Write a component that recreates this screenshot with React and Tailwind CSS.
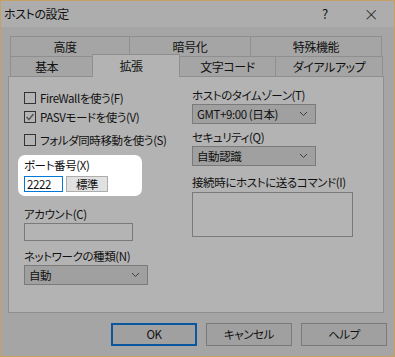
import React from "react";

function Chevron() {
  return (
    <svg width="9" height="6" viewBox="0 0 9 6" className="shrink-0">
      <polyline points="1,1 4.5,4.5 8,1" fill="none" stroke="#3c3c3c" strokeWidth="1" />
    </svg>
  );
}

function Check({ checked, label }) {
  return (
    <div className="flex h-[16px] items-center gap-[4px]">
      <div className="flex h-[12px] w-[12px] items-center justify-center border border-[#333333] bg-[#b4b4b4]">
        {checked && (
          <svg width="10" height="10" viewBox="0 0 10 10">
            <polyline points="1.5,5 4,7.5 8.5,2" fill="none" stroke="#505050" strokeWidth="1.3" />
          </svg>
        )}
      </div>
      <span className="leading-[16px]">{label}</span>
    </div>
  );
}

function Select({ value, width }) {
  return (
    <div className={`mt-[1px] flex h-[20px] ${width} items-center justify-between border border-[#7a7a7a] bg-[#a0a0a0] pl-[4px] pr-[7px]`}>
      <span className="leading-[16px]">{value}</span>
      <Chevron />
    </div>
  );
}

function Label({ children, className = "" }) {
  return <div className={`h-[16px] leading-[16px] ${className}`}>{children}</div>;
}

export default function App() {
  return (
    <div className="flex h-[357px] w-[395px] flex-col border border-[#c9a063] bg-[#a5a5a5] font-['Noto_Sans_CJK_JP',sans-serif] text-[11.5px] tracking-[-0.4px] text-[#111111] [font-feature-settings:'palt']">
      {/* title bar */}
      <div className="flex h-[26px] items-center bg-[#adadad]">
        <span className="flex-1 pl-[3px] text-[12px]">ホストの設定</span>
        <span className="flex w-[46px] justify-center text-[13px]">?</span>
        <span className="flex w-[46px] justify-center text-[15px] font-light">×</span>
      </div>

      {/* tabs */}
      <div className="ml-[9px] mt-[9px] flex h-[20px] text-[12px]">
        <div className="flex w-[120px] items-center justify-center border-l border-r border-t border-[#8f8f8f] pr-[10px]">高度</div>
        <div className="flex w-[121px] items-center justify-center border-r border-t border-[#8f8f8f]">暗号化</div>
        <div className="flex w-[131px] items-center justify-center border-r border-t border-[#8f8f8f]">特殊機能</div>
      </div>
      <div className="ml-[9px] flex h-[20px] items-end text-[12px]">
        <div className="flex h-[20px] w-[82px] items-center justify-center border-l border-t border-[#8f8f8f] pr-[10px]">基本</div>
        <div className="relative top-[1px] z-10 flex h-[23px] w-[88px] items-center justify-center border-l border-r border-t border-[#8f8f8f] bg-[#b3b3b3] pr-[10px]">拡張</div>
        <div className="flex h-[20px] w-[95px] items-center justify-center border-t border-[#8f8f8f]">文字コード</div>
        <div className="flex h-[20px] w-[108px] items-center justify-center border-l border-r border-t border-[#8f8f8f]">ダイアルアップ</div>
      </div>

      {/* panel */}
      <div className="ml-[7px] flex h-[237px] w-[376px] border border-[#8f8f8f] bg-[#b3b3b3] pl-[15px]">
        <div className="flex w-[168px] flex-col">
          <div className="mt-[13px]">
            <Check label="FireWallを使う(F)" />
          </div>
          <div className="mt-[3px]">
            <Check checked label="PASVモードを使う(V)" />
          </div>
          <div className="mt-[7px]">
            <Check label="フォルダ同時移動を使う(S)" />
          </div>
          <div className="-ml-[6px] mt-[7px] h-[41px] w-[124px] rounded-[7px] bg-white px-[6px] pt-[2px]">
            <Label>ポート番号(X)</Label>
            <div className="mt-[3px] flex">
              <div className="flex h-[16px] w-[39px] items-center border border-[#0078d7] bg-white pl-[2px] leading-[14px]">2222</div>
              <div className="ml-[3px] flex h-[16px] w-[42px] items-center justify-center border border-[#adadad] bg-[#e1e1e1] leading-[14px]">標準</div>
            </div>
          </div>
          <Label className="mt-[10px]">アカウント(C)</Label>
          <div className="mt-[1px] h-[18px] w-[109px] border border-[#7a7a7a] bg-[#b4b4b4]" />
          <Label className="mt-[7px]">ネットワークの種類(N)</Label>
          <Select value="自動" width="w-[124px]" />
        </div>

        <div className="flex flex-col">
          <Label className="mt-[10px]">ホストのタイムゾーン(T)</Label>
          <Select value="GMT+9:00 (日本)" width="w-[124px]" />
          <Label className="mt-[5px]">セキュリティ(Q)</Label>
          <Select value="自動認識" width="w-[124px]" />
          <Label className="mt-[8px]">接続時にホストに送るコマンド(I)</Label>
          <div className="mt-[2px] h-[45px] w-[161px] border border-[#7a7a7a] bg-[#b4b4b4]" />
        </div>
      </div>

      {/* buttons */}
      <div className="mt-[10px] flex justify-end gap-[9px] pr-[7px]">
        <div className="flex h-[23px] w-[86px] items-center justify-center border-2 border-[#0a57a0] bg-[#a0a0a0]">OK</div>
        <div className="flex h-[23px] w-[86px] items-center justify-center border border-[#7a7a7a] bg-[#a0a0a0]">キャンセル</div>
        <div className="flex h-[23px] w-[86px] items-center justify-center border border-[#7a7a7a] bg-[#a0a0a0]">ヘルプ</div>
      </div>
    </div>
  );
}
